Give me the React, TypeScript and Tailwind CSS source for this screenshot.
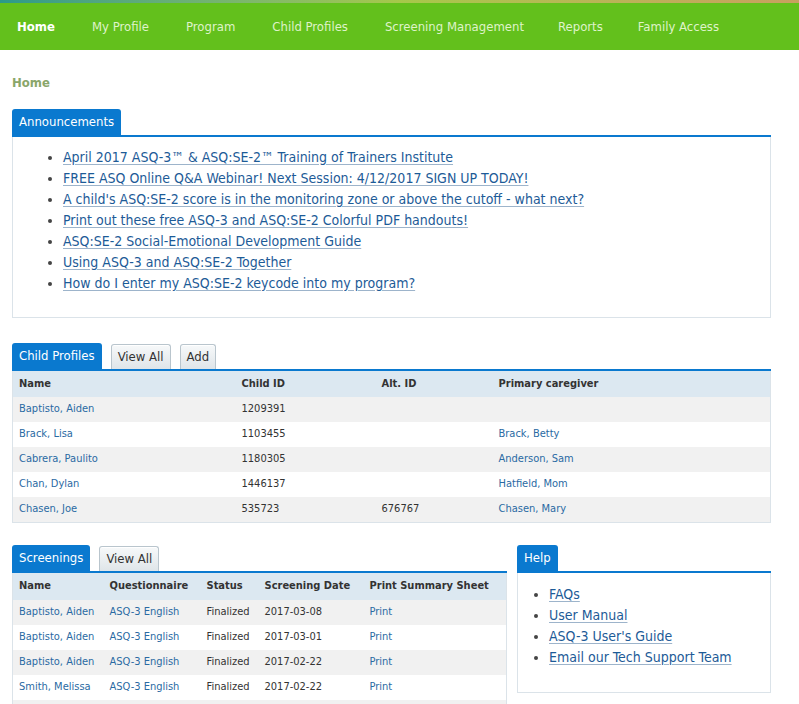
const font = "font-['Tahoma','DejaVu_Sans_Condensed','DejaVu_Sans',sans-serif]";

const navItems = [
	{ label: "Home", mr: "mr-[37px]" },
	{ label: "My Profile", mr: "mr-[37px]" },
	{ label: "Program", mr: "mr-[37px]" },
	{ label: "Child Profiles", mr: "mr-[37px]" },
	{ label: "Screening Management", mr: "mr-[34px]" },
	{ label: "Reports", mr: "mr-[35px]" },
	{ label: "Family Access", mr: "" },
];

const announcements = [
	"April 2017 ASQ-3™ & ASQ:SE-2™ Training of Trainers Institute",
	"FREE ASQ Online Q&A Webinar! Next Session: 4/12/2017 SIGN UP TODAY!",
	"A child's ASQ:SE-2 score is in the monitoring zone or above the cutoff - what next?",
	"Print out these free ASQ-3 and ASQ:SE-2 Colorful PDF handouts!",
	"ASQ:SE-2 Social-Emotional Development Guide",
	"Using ASQ-3 and ASQ:SE-2 Together",
	"How do I enter my ASQ:SE-2 keycode into my program?",
];

const children = [
	{ name: "Baptisto, Aiden", id: "1209391", alt: "", caregiver: "" },
	{ name: "Brack, Lisa", id: "1103455", alt: "", caregiver: "Brack, Betty" },
	{ name: "Cabrera, Paulito", id: "1180305", alt: "", caregiver: "Anderson, Sam" },
	{ name: "Chan, Dylan", id: "1446137", alt: "", caregiver: "Hatfield, Mom" },
	{ name: "Chasen, Joe", id: "535723", alt: "676767", caregiver: "Chasen, Mary" },
];

const screenings = [
	{ name: "Baptisto, Aiden", date: "2017-03-08" },
	{ name: "Baptisto, Aiden", date: "2017-03-01" },
	{ name: "Baptisto, Aiden", date: "2017-02-22" },
	{ name: "Smith, Melissa", date: "2017-02-22" },
];

const helpLinks = ["FAQs", "User Manual", "ASQ-3 User's Guide", "Email our Tech Support Team"];

function ActiveTab({ label }: { label: string }) {
	return (
		<div className="h-[26px] px-[7px] flex items-center bg-[#0a79cf] text-white text-[13px] rounded-t-[3px]">
			{label}
		</div>
	);
}

function Tab({ label }: { label: string }) {
	return (
		<div className="h-[25px] px-[6px] flex items-center border border-b-0 border-[#b9c5cd] bg-gradient-to-b from-[#f7f9fa] to-[#dfe5e9] text-[#333] text-[13px] rounded-t-[3px] shadow-[inset_0_1px_0_#fff]">
			{label}
		</div>
	);
}

function TabBar({ active, tabs = [] }: { active: string; tabs?: string[] }) {
	return (
		<div className="flex items-end gap-[9px] border-b-2 border-[#0a79cf]">
			<ActiveTab label={active} />
			{tabs.map((t) => (
				<Tab key={t} label={t} />
			))}
		</div>
	);
}

export default function App() {
	return (
		<div className={`${font} w-[799px] h-[704px] overflow-hidden bg-white`}>
			<div className="h-[3px] bg-gradient-to-r from-[#2a9a8a] via-[#a6c84a] to-[#c8a060]" />
			<nav className="h-[47px] flex items-center bg-[#63c01c] text-[13px] pl-[17px]">
				{navItems.map((item, i) => (
					<a
						key={item.label}
						className={`${item.mr} ${i === 0 ? "font-bold text-white" : "text-[#dff3c9]"}`}
					>
						{item.label}
					</a>
				))}
			</nav>

			<div className="px-[12px] w-[783px]">
				<div className="pt-[23px] h-[59px] text-[13px] font-bold text-[#8aa66a]">Home</div>

				{/* announcements */}
				<TabBar active="Announcements" />
				<div className="border border-t-0 border-[#dbe3e9] h-[181px] pt-[10px]">
					<ul className="list-disc pl-[50px] text-[14px] leading-[21px] text-[#1d5b97] marker:text-[#444]">
						{announcements.map((a) => (
							<li key={a}>
								<a className="underline decoration-[#9db4cb] underline-offset-2">{a}</a>
							</li>
						))}
					</ul>
				</div>

				{/* child profiles */}
				<div className="mt-[25px]">
					<TabBar active="Child Profiles" tabs={["View All", "Add"]} />
					<table className="w-full text-[11px] text-[#333] border border-t-0 border-[#dbe3e9] border-collapse">
						<thead>
							<tr className="h-[26px] bg-[#dce8f1] text-left">
								<th className="pl-[6px] w-[229px] font-bold">Name</th>
								<th className="w-[140px] font-bold">Child ID</th>
								<th className="w-[117px] font-bold">Alt. ID</th>
								<th className="font-bold">Primary caregiver</th>
							</tr>
						</thead>
						<tbody>
							{children.map((c, i) => (
								<tr key={c.name} className={`h-[25px] ${i % 2 === 0 ? "bg-[#f1f1f1]" : "bg-white"}`}>
									<td className="pl-[6px] text-[#2a6aa3]">{c.name}</td>
									<td>{c.id}</td>
									<td>{c.alt}</td>
									<td className="text-[#2a6aa3]">{c.caregiver}</td>
								</tr>
							))}
						</tbody>
					</table>
				</div>

				{/* bottom row */}
				<div className="mt-[22px] flex gap-[10px] items-start">
					<div className="w-[495px]">
						<TabBar active="Screenings" tabs={["View All"]} />
						<table className="w-full text-[11px] text-[#333] border border-t-0 border-[#dbe3e9] border-collapse">
							<thead>
								<tr className="h-[27px] bg-[#dce8f1] text-left">
									<th className="pl-[6px] w-[97px] font-bold">Name</th>
									<th className="w-[97px] font-bold">Questionnaire</th>
									<th className="w-[58px] font-bold">Status</th>
									<th className="w-[105px] font-bold">Screening Date</th>
									<th className="font-bold">Print Summary Sheet</th>
								</tr>
							</thead>
							<tbody>
								{screenings.map((s, i) => (
									<tr key={i} className={`h-[25px] ${i % 2 === 0 ? "bg-[#f1f1f1]" : "bg-white"}`}>
										<td className="pl-[6px] text-[#2a6aa3]">{s.name}</td>
										<td className="text-[#2a6aa3]">ASQ-3 English</td>
										<td>Finalized</td>
										<td>{s.date}</td>
										<td className="text-[#2a6aa3]">Print</td>
									</tr>
								))}
								<tr className="h-[25px] bg-[#f1f1f1]">
									<td colSpan={5} />
								</tr>
							</tbody>
						</table>
					</div>

					<div className="w-[254px]">
						<TabBar active="Help" />
						<div className="border border-t-0 border-[#dbe3e9] h-[120px] pt-[11px]">
							<ul className="list-disc pl-[31px] text-[14px] leading-[21px] text-[#1d5b97] marker:text-[#444]">
								{helpLinks.map((h) => (
									<li key={h}>
										<a className="underline decoration-[#9db4cb] underline-offset-2">{h}</a>
									</li>
								))}
							</ul>
						</div>
					</div>
				</div>
			</div>
		</div>
	);
}
